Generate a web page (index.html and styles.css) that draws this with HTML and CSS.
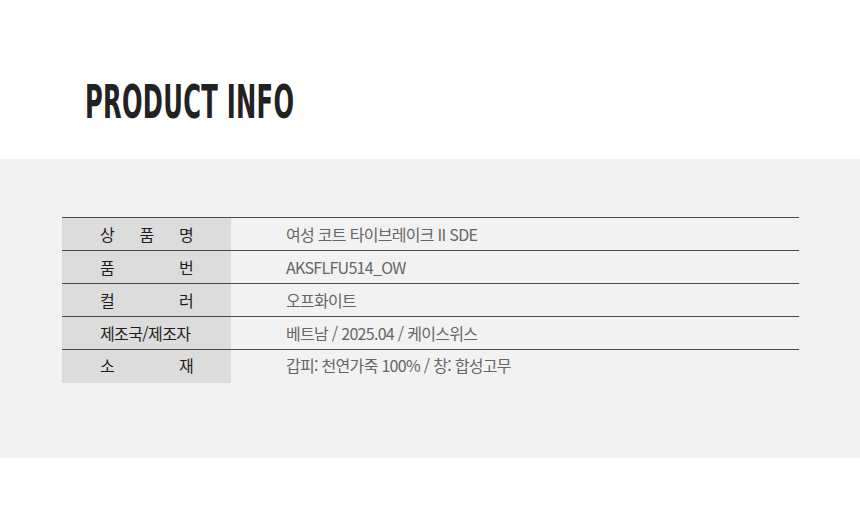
FILE: index.html
```html
<!DOCTYPE html>
<html lang="ko">
<head>
<meta charset="utf-8">
<link rel="stylesheet" href="styles.css">
</head>
<body>
<header class="top">
  <h1 class="title"><span class="title-text">PRODUCT INFO</span></h1>
</header>
<section class="band">
  <table class="info">
    <tr><th>상 품 명</th><td>여성 코트 타이브레이크 II SDE</td></tr>
    <tr><th>품 번</th><td>AKSFLFU514_OW</td></tr>
    <tr><th>컬 러</th><td>오프화이트</td></tr>
    <tr><th>제조국/제조자</th><td>베트남 / 2025.04 / 케이스위스</td></tr>
    <tr class="last"><th>소 재</th><td>갑피: 천연가죽 100% / 창: 합성고무</td></tr>
  </table>
</section>
</body>
</html>
```
FILE: styles.css
```css
html, body {
  margin: 0;
  padding: 0;
  background: #ffffff;
}
body {
  width: 860px;
  height: 532px;
  font-family: "Noto Sans CJK KR", "Noto Sans", sans-serif;
}
.top {
  height: 159px;
  box-sizing: border-box;
  padding: 76px 0 0 85px;
}
.title {
  margin: 0;
  font-family: "DejaVu Sans Condensed", "DejaVu Sans", sans-serif;
  font-weight: bold;
  font-size: 46px;
  line-height: 52px;
  color: #222222;
  white-space: nowrap;
}
.title-text {
  display: inline-block;
  transform: scaleX(0.585);
  transform-origin: left center;
  letter-spacing: 0.5px;
}
.band {
  background: #f2f2f2;
  height: 299px;
  box-sizing: border-box;
  padding: 58px 61px 0 62px;
}
.info {
  width: 100%;
  border-collapse: collapse;
}
.info tr {
  border-top: 1px solid #4a4a4a;
}
.info th {
  width: 93px;
  background: #dcdcdc;
  padding: 0 38px;
  height: 32px;
  font-size: 16px;
  font-weight: 400;
  color: #1e1e1e;
  text-align: justify;
  text-align-last: justify;
  letter-spacing: -0.6px;
  vertical-align: middle;
}
.info td {
  padding: 0 0 0 55px;
  height: 32px;
  font-size: 16px;
  color: #666666;
  letter-spacing: -0.7px;
  vertical-align: middle;
}
.info tr.last th,
.info tr.last td {
  height: 30px;
  padding-bottom: 3px;
}
```
